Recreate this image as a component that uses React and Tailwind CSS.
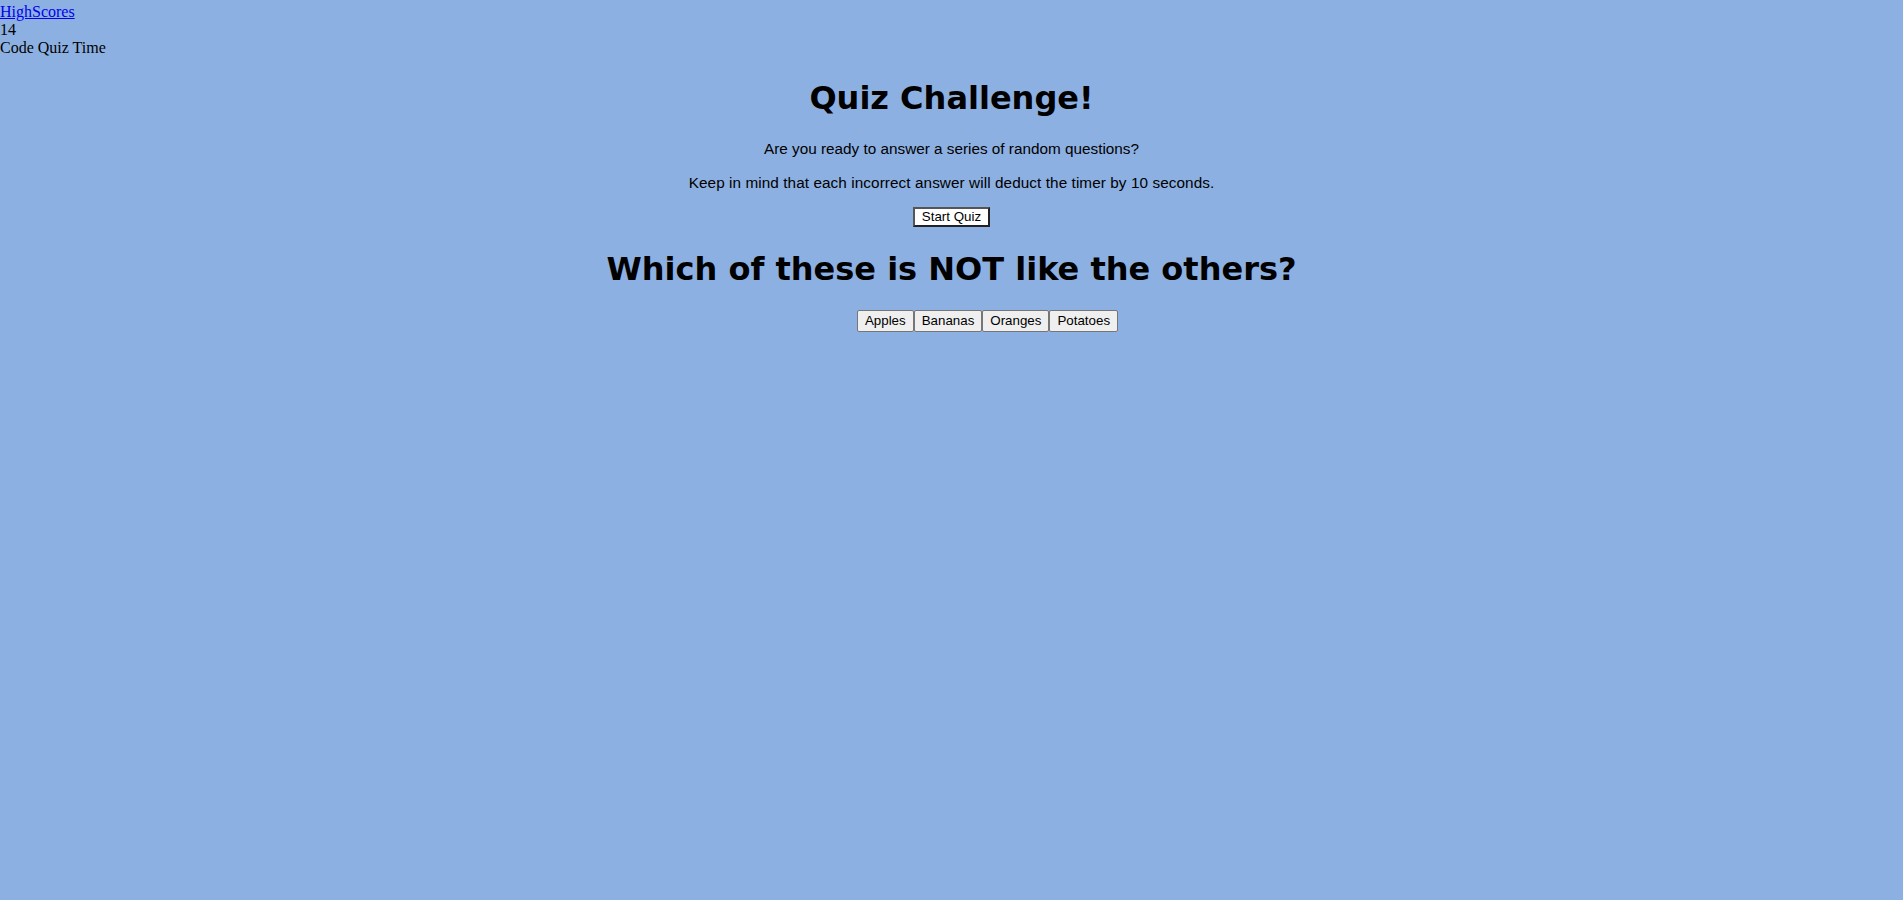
export default function App() {
  const answers = ["Apples", "Bananas", "Oranges", "Potatoes"];
  return (
    <div className="min-h-screen bg-[#8db0e2] pt-[3px] text-black font-['Liberation_Serif',serif] text-[16px] leading-[18px]">
      <a href="#" className="block w-fit text-[#0000ee] underline">HighScores</a>
      <div>14</div>
      <div>Code Quiz Time</div>
      <div className="flex flex-col items-center text-center">
        <h1 className="mt-[23px] font-['DejaVu_Sans',sans-serif] font-bold text-[32px] leading-[37px]">Quiz Challenge!</h1>
        <p className="mt-[23px] font-['Liberation_Sans',Arial,sans-serif] text-[15.3px] leading-[18px]">Are you ready to answer a series of random questions?</p>
        <p className="mt-[16px] font-['Liberation_Sans',Arial,sans-serif] text-[15.3px] leading-[18px] tracking-[0.08px]">Keep in mind that each incorrect answer will deduct the timer by 10 seconds.</p>
        <button className="mt-[15px] h-[20px] px-[7px] bg-white border-2 border-[#555555] border-r-[#222222] border-b-[#222222] font-['Liberation_Sans',Arial,sans-serif] text-[13.33px] leading-[16px]">Start Quiz</button>
        <h2 className="mt-[24px] font-['DejaVu_Sans',sans-serif] font-bold text-[32px] leading-[37px]">Which of these is NOT like the others?</h2>
        <div className="mt-[22px] flex w-full justify-center pl-[72px]">
          {answers.map((a) => (
            <button key={a} className="h-[22px] px-[7px] bg-[#efefef] border border-[#767676] rounded-[2px] font-['Liberation_Sans',Arial,sans-serif] text-[13.33px] leading-[16px]">{a}</button>
          ))}
        </div>
      </div>
    </div>
  );
}
